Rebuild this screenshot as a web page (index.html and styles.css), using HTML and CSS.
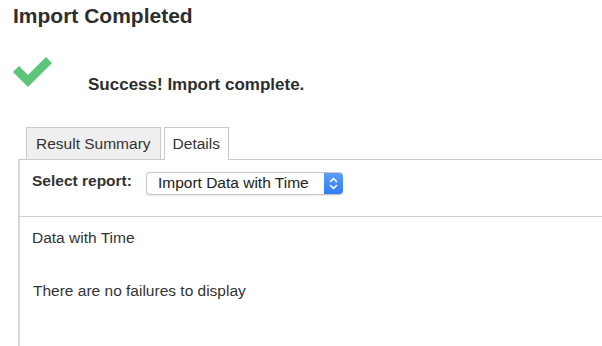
FILE: index.html
```html
<!DOCTYPE html>
<html lang="en">
<head>
<meta charset="utf-8">
<title>Import Completed</title>
<link rel="stylesheet" href="styles.css">
</head>
<body>
<div class="page">
  <h1 class="title">Import Completed</h1>
  <div class="status">
    <svg class="check" width="40" height="31" viewBox="0 0 40 31" aria-hidden="true">
      <polyline points="3,12 15,24 36,3" fill="none" stroke="#5cc577" stroke-width="8.5" stroke-linecap="butt" stroke-linejoin="miter"/>
    </svg>
    <div class="status-text">Success! Import complete.</div>
  </div>
  <div class="tabbox">
    <div class="tabs">
      <div class="tab">Result Summary</div>
      <div class="tab active">Details</div>
    </div>
    <div class="panel">
      <div class="report-row">
        <span class="report-label">Select report:</span>
        <div class="select">
          <span class="select-value">Import Data with Time</span>
          <span class="select-arrows">
            <svg width="19" height="21" viewBox="0 0 19 21" aria-hidden="true">
              <polyline points="6.5,8.5 9.5,5.5 12.5,8.5" fill="none" stroke="#fff" stroke-width="1.6" stroke-linecap="round" stroke-linejoin="round"/>
              <polyline points="6.5,12.5 9.5,15.5 12.5,12.5" fill="none" stroke="#fff" stroke-width="1.6" stroke-linecap="round" stroke-linejoin="round"/>
            </svg>
          </span>
        </div>
      </div>
      <div class="report-body">
        <p class="report-name">Data with Time</p>
        <p class="report-msg">There are no failures to display</p>
      </div>
    </div>
  </div>
</div>
</body>
</html>
```

FILE: styles.css
```css
html, body {
  margin: 0;
  padding: 0;
  background: #fff;
  overflow: hidden;
}

body {
  font-family: "Liberation Sans", Arial, Helvetica, sans-serif;
  color: #333;
}

.page {
  min-height: 100vh;
  box-sizing: border-box;
  display: flex;
  flex-direction: column;
  padding-left: 13px;
}

.title {
  margin: 0;
  padding-top: 4px;
  font-size: 21px;
  line-height: 24px;
  font-weight: bold;
  color: #2e2e2e;
}

.status {
  display: flex;
  align-items: flex-start;
  margin-top: 29px;
}

.check {
  display: block;
  flex: none;
}

.status-text {
  margin-left: 35px;
  margin-top: 18px;
  font-size: 17px;
  line-height: 20px;
  font-weight: bold;
  color: #2e2e2e;
}

.tabbox {
  flex: 1;
  display: flex;
  flex-direction: column;
  margin-top: 32px;
  margin-left: 5px;
}

.tabs {
  display: flex;
  align-items: flex-start;
  gap: 3px;
  padding-left: 8px;
}

.tab {
  box-sizing: border-box;
  height: 32px;
  padding: 0 9px;
  border: 1px solid #c9c9c9;
  border-bottom: none;
  background: #efefef;
  font-size: 15.5px;
  line-height: 31px;
  color: #333;
}

.tab.active {
  position: relative;
  z-index: 1;
  height: 33px;
  margin-bottom: -1px;
  padding: 0 8px 0 8px;
  background: #fff;
}

.panel {
  flex: 1;
  border-top: 1px solid #c9c9c9;
  border-left: 2px solid #d6d6d6;
}

.report-row {
  display: flex;
  align-items: flex-start;
  gap: 14px;
  padding: 12px 0 21px 12px;
  border-bottom: 1px solid #cfcfcf;
}

.report-label {
  font-size: 15.5px;
  line-height: 18px;
  font-weight: bold;
  color: #333;
}

.select {
  box-sizing: border-box;
  display: flex;
  width: 197px;
  height: 23px;
  border: 1px solid #c6c6c6;
  border-right: none;
  border-radius: 4px;
  background: #fff;
  box-shadow: 0 1px 1px rgba(0, 0, 0, 0.08);
  overflow: hidden;
}

.select-value {
  flex: 1;
  padding-left: 11px;
  font-size: 15.5px;
  line-height: 19px;
  color: #222;
  white-space: nowrap;
}

.select-arrows {
  flex: none;
  width: 19px;
  margin-top: -1px;
  height: 23px;
  display: flex;
  align-items: center;
  justify-content: center;
  background: linear-gradient(#5f9ff9, #2f7bf5);
  border-radius: 0 4px 4px 0;
}

.select-arrows svg {
  display: block;
}

.report-body {
  padding-left: 12px;
}

.report-name {
  margin: 12px 0 0 0;
  font-size: 15.5px;
  line-height: 18px;
  color: #333;
}

.report-msg {
  margin: 35px 0 0 1px;
  font-size: 15.5px;
  line-height: 18px;
  color: #333;
}
```
